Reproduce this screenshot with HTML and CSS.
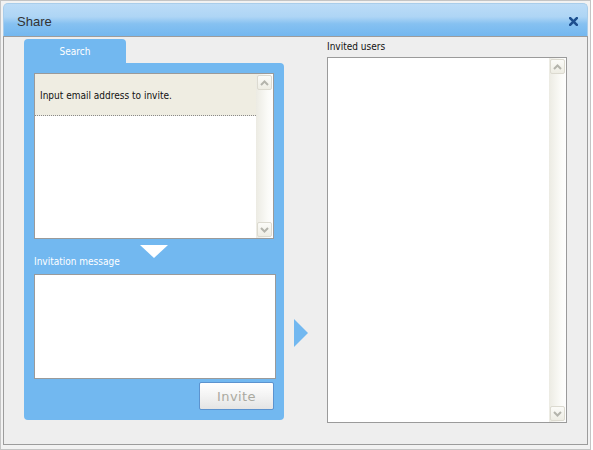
FILE: index.html
```html
<!DOCTYPE html>
<html>
  <head>
    <meta charset="UTF-8">
    <title>Share</title>
    <link rel="stylesheet" href="styles.css">
  </head>
  <body>
    <div class="frame">
      <div class="dialog">
        <div class="titlebar">
          <span class="title">Share</span>
          <svg class="close" width="9" height="9" viewBox="0 0 9 9">
            <path d="M1.2 1.2 L7.8 7.8 M7.8 1.2 L1.2 7.8" stroke="#1d4f8f" stroke-width="2.6" stroke-linecap="square"/>
          </svg>
        </div>

        <div class="dialog-body">
          <!-- left: search + message -->
          <div class="left-col">
            <div class="tab">Search</div>
            <div class="panel">
              <div class="listbox">
                <div class="list-items">
                  <div class="list-hint">Input email address to invite.</div>
                </div>
                <div class="scrollbar">
                  <div class="sb-btn">
                    <svg width="9" height="6" viewBox="0 0 9 6"><polyline points="1,5 4.5,1.5 8,5" fill="none" stroke="#b4b4ac" stroke-width="2"/></svg>
                  </div>
                  <div class="sb-track"></div>
                  <div class="sb-btn">
                    <svg width="9" height="6" viewBox="0 0 9 6"><polyline points="1,1 4.5,4.5 8,1" fill="none" stroke="#b4b4ac" stroke-width="2"/></svg>
                  </div>
                </div>
              </div>
              <div class="down-arrow"></div>
              <div class="panel-label">Invitation message</div>
              <div class="message"></div>
              <div class="actions">
                <button class="invite-btn" disabled>Invite</button>
              </div>
            </div>
          </div>

          <div class="mid-col">
            <div class="right-arrow"></div>
          </div>

          <!-- right: invited users -->
          <div class="right-col">
            <div class="right-label">Invited users</div>
            <div class="listbox users">
              <div class="list-items"></div>
              <div class="scrollbar">
                <div class="sb-btn">
                  <svg width="9" height="6" viewBox="0 0 9 6"><polyline points="1,5 4.5,1.5 8,5" fill="none" stroke="#b4b4ac" stroke-width="2"/></svg>
                </div>
                <div class="sb-track"></div>
                <div class="sb-btn">
                  <svg width="9" height="6" viewBox="0 0 9 6"><polyline points="1,1 4.5,4.5 8,1" fill="none" stroke="#b4b4ac" stroke-width="2"/></svg>
                </div>
              </div>
            </div>
          </div>
        </div>
      </div>
    </div>
  </body>
</html>
```

FILE: styles.css
```css
body {
  margin: 0;
  background: #ffffff;
  font-family: "DejaVu Sans Condensed", "DejaVu Sans", Verdana, sans-serif;
  font-size: 10px;
  color: #111;
}

/* outer window frame */
.frame {
  width: 585px;
  height: 444px;
  border: 1px solid #c4c4c4;
  padding: 2px;
  background: #f2f2f2;
}

.dialog {
  width: 585px;
  height: 442px;
  display: flex;
  flex-direction: column;
}

.titlebar {
  height: 32px;
  flex: none;
  display: flex;
  align-items: center;
  justify-content: space-between;
  padding: 0 9px 0 13px;
  border: 1px solid #a9cdea;
  border-bottom: none;
  border-radius: 5px 5px 0 0;
  background: linear-gradient(#bcdcf7, #aed5f5 40%, #86c1f1 62%, #73b7ef);
}

.title {
  font-family: "Liberation Sans", Arial, sans-serif;
  font-size: 13px;
  color: #333;
  padding-top: 2px;
}

.close {
  display: block;
  margin-top: 3px;
}

.dialog-body {
  flex: 1;
  display: flex;
  background: #eeeeee;
  border: 1px solid #9c9c9c;
  padding: 2px 0 0 20px;
}

/* left column */
.left-col {
  width: 260px;
  display: flex;
  flex-direction: column;
}

.tab {
  width: 102px;
  height: 24px;
  line-height: 26px;
  text-align: center;
  color: #fff;
  background: #72b8f0;
  border-radius: 4px 4px 0 0;
}

.panel {
  height: 337px;
  background: #72b8f0;
  border-radius: 0 4px 4px 4px;
  padding: 10px;
  display: flex;
  flex-direction: column;
}

.listbox {
  height: 164px;
  border: 1px solid #9a9a9a;
  background: #fff;
  display: flex;
}

.list-items {
  flex: 1;
}

.list-hint {
  height: 41px;
  line-height: 44px;
  padding-left: 5px;
  background: #efede2;
  border-bottom: 1px dotted #8a8a8a;
  color: #111;
}

.scrollbar {
  width: 17px;
  display: flex;
  flex-direction: column;
  background: linear-gradient(to right, #ecebe3, #fbfbf8 70%, #fefefe);
}

.sb-track {
  flex: 1;
}

.sb-btn {
  width: 15px;
  height: 15px;
  margin: 1px;
  box-sizing: border-box;
  border: 1px solid #dcdad0;
  border-radius: 2px;
  background: linear-gradient(#fbfbf8, #eeede4);
  display: flex;
  align-items: center;
  justify-content: center;
}

.down-arrow {
  width: 0;
  height: 0;
  margin: 6px auto 0;
  border-left: 14px solid transparent;
  border-right: 14px solid transparent;
  border-top: 13px solid #fff;
}

.panel-label {
  color: #fff;
  line-height: 13px;
  margin-top: -3px;
}

.message {
  width: 240px;
  height: 103px;
  margin-top: 6px;
  border: 1px solid #9a9a9a;
  background: #fff;
}

.actions {
  display: flex;
  justify-content: flex-end;
  margin-top: 3px;
}

.invite-btn {
  width: 75px;
  height: 28px;
  border: 1px solid #5c93cf;
  border-radius: 2px;
  background: linear-gradient(#ffffff, #f3f3f3 50%, #e4e4e4);
  color: #aaa9a0;
  font-family: "DejaVu Sans", Verdana, sans-serif;
  font-size: 13px;
  letter-spacing: 0.4px;
  padding: 1px 0 0;
}

/* middle arrow */
.mid-col {
  width: 43px;
}

.right-arrow {
  width: 0;
  height: 0;
  margin: 280px 0 0 10px;
  border-top: 14px solid transparent;
  border-bottom: 14px solid transparent;
  border-left: 14px solid #72b8f0;
}

/* right column */
.right-col {
  width: 240px;
  padding-top: 1px;
}

.right-label {
  line-height: 13px;
  margin-bottom: 4px;
}

.users {
  height: 364px;
}
```
